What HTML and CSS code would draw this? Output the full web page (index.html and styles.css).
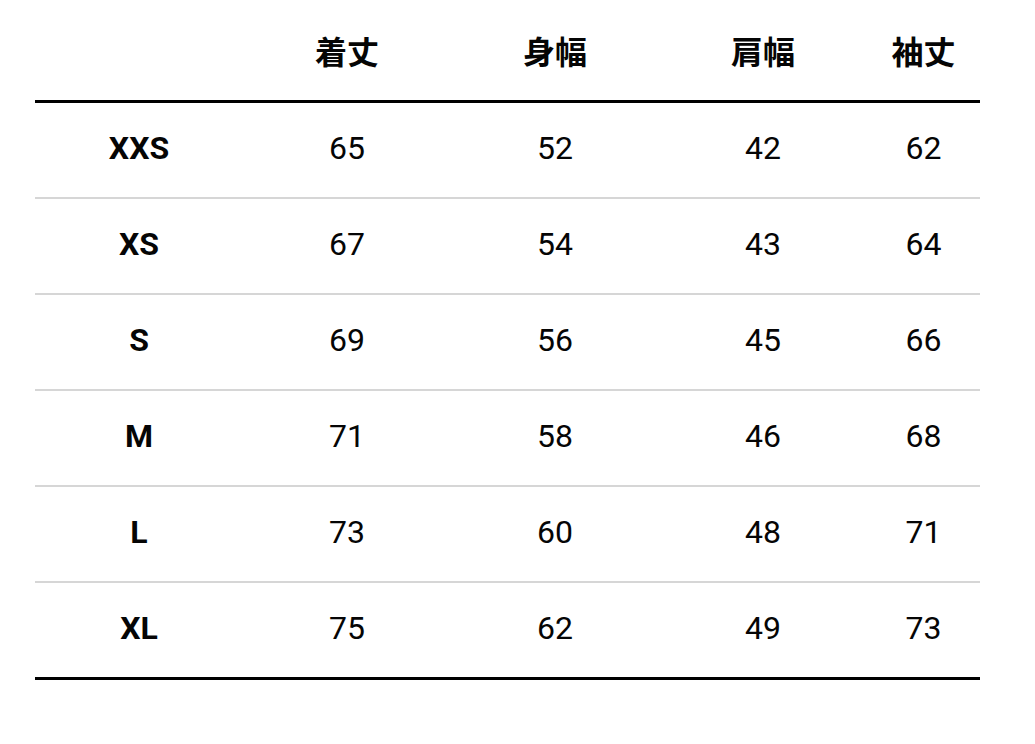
FILE: index.html
```html
<!DOCTYPE html>
<html lang="ja">
<head>
<meta charset="utf-8">
<title>サイズ表</title>
<link rel="stylesheet" href="styles.css">
</head>
<body>
<div class="size-table">
  <div class="row head">
    <div class="cell"></div>
    <div class="cell">着丈</div>
    <div class="cell">身幅</div>
    <div class="cell">肩幅</div>
    <div class="cell">袖丈</div>
  </div>
  <div class="row">
    <div class="cell label">XXS</div><div class="cell">65</div><div class="cell">52</div><div class="cell">42</div><div class="cell">62</div>
  </div>
  <div class="row">
    <div class="cell label">XS</div><div class="cell">67</div><div class="cell">54</div><div class="cell">43</div><div class="cell">64</div>
  </div>
  <div class="row">
    <div class="cell label">S</div><div class="cell">69</div><div class="cell">56</div><div class="cell">45</div><div class="cell">66</div>
  </div>
  <div class="row">
    <div class="cell label">M</div><div class="cell">71</div><div class="cell">58</div><div class="cell">46</div><div class="cell">68</div>
  </div>
  <div class="row">
    <div class="cell label">L</div><div class="cell">73</div><div class="cell">60</div><div class="cell">48</div><div class="cell">71</div>
  </div>
  <div class="row last">
    <div class="cell label">XL</div><div class="cell">75</div><div class="cell">62</div><div class="cell">49</div><div class="cell">73</div>
  </div>
</div>
</body>
</html>
```
FILE: styles.css
```css
html, body {
  margin: 0;
  padding: 0;
  background: #ffffff;
}
body {
  font-family: Roboto, "Noto Sans CJK JP", sans-serif;
  color: #050505;
  padding: 4px 55px 0 35px;
}
.size-table {
  width: 945px;
}
.row {
  display: grid;
  grid-template-columns: 208px 208px 208px 208px 113px;
  height: 94px;
  border-bottom: 2px solid #d6d6d6;
}
.row.head {
  height: 96px;
  border-bottom: 3px solid #000000;
}
.row.last {
  border-bottom: 3px solid #000000;
}
.cell {
  display: flex;
  align-items: center;
  justify-content: center;
  font-size: 32px;
  font-weight: 400;
  padding-bottom: 4px;
}
.head .cell {
  font-family: "Noto Sans CJK JP", sans-serif;
  font-weight: 700;
}
.cell.label {
  font-weight: 700;
}
```
